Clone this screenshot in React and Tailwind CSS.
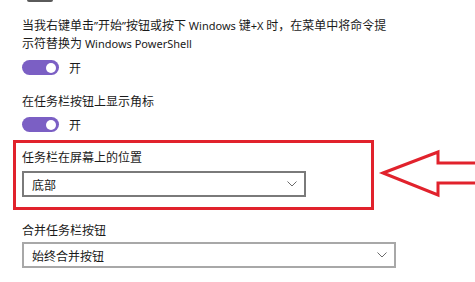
function Toggle() {
  return (
    <div className="flex items-center gap-[10px]">
      <div className="w-[37px] h-[15px] rounded-full bg-[#7b5fc4] flex items-center justify-end pr-[3px]">
        <div className="w-[10px] h-[10px] rounded-full bg-white" />
      </div>
      <span className="text-[12px] leading-[17px] text-[#1a1a1a]">开</span>
    </div>
  )
}

function Chevron() {
  return (
    <svg width="10" height="6" viewBox="0 0 10 6" fill="none" stroke="#6b6b6b" strokeWidth="1">
      <path d="M0.5 0.5L5 5L9.5 0.5" />
    </svg>
  )
}

function Select({ value, width, border }) {
  return (
    <div className={`${width} h-[26px] border-2 ${border} bg-white flex items-center justify-between pl-[8px] pr-[7px]`}>
      <span className="text-[12px] leading-[17px] text-[#1a1a1a]">{value}</span>
      <Chevron />
    </div>
  )
}

// Latin runs are set smaller, as the CJK UI font in the reference does
function L({ children }) {
  return (
    <span className="text-[11px]" style={{ fontFamily: '"Noto Sans", sans-serif' }}>
      {children}
    </span>
  )
}

export default function App() {
  return (
    <div
      className="relative w-[475px] h-[282px] bg-white overflow-hidden text-[#1a1a1a]"
      style={{ fontFamily: '"Noto Sans CJK SC", "Noto Sans", sans-serif' }}
    >
      {/* stub of the control above */}
      <div className="ml-[27px] w-[26px] h-[2px] bg-[#5a5a5a] rounded-b-sm" />

      <div className="pl-[22px]">
        <div className="mt-[14px] text-[12px] leading-[17px] whitespace-nowrap">
          当我右键单击<L>”</L>开始<L>”</L>按钮或按下<L> Windows </L>键<L>+X </L>时，在菜单中将命令提
        </div>
        <div className="text-[12px] leading-[17px] whitespace-nowrap">
          示符替换为<L> Windows PowerShell</L>
        </div>
        <div className="mt-[7px]">
          <Toggle />
        </div>
        <p className="mt-[16px] text-[12px] leading-[17px]">在任务栏按钮上显示角标</p>
        <div className="mt-[7px]">
          <Toggle />
        </div>
      </div>

      {/* highlighted section */}
      <div className="mt-[7px] ml-[13px] w-[361px] h-[70px] border-[3px] border-[#e1222c] pl-[6px] pt-[5px]">
        <p className="text-[12px] leading-[17px]">任务栏在屏幕上的位置</p>
        <div className="mt-[6px]">
          <Select value="底部" width="w-[284px]" border="border-[#7a7a7a]" />
        </div>
      </div>

      <div className="pl-[22px]">
        <p className="mt-[11px] text-[12px] leading-[17px]">合并任务栏按钮</p>
        <div className="mt-[4px]">
          <Select value="始终合并按钮" width="w-[374px]" border="border-[#a8a8a8]" />
        </div>
      </div>

      {/* annotation arrow */}
      <svg className="absolute left-0 top-0" width="475" height="282" viewBox="0 0 475 282" fill="none">
        <polygon
          points="383,173 438,152 438,163 480,163 480,183 438,183 438,195"
          fill="white"
          stroke="#e1222c"
          strokeWidth="3"
          strokeLinejoin="miter"
        />
      </svg>
    </div>
  )
}
